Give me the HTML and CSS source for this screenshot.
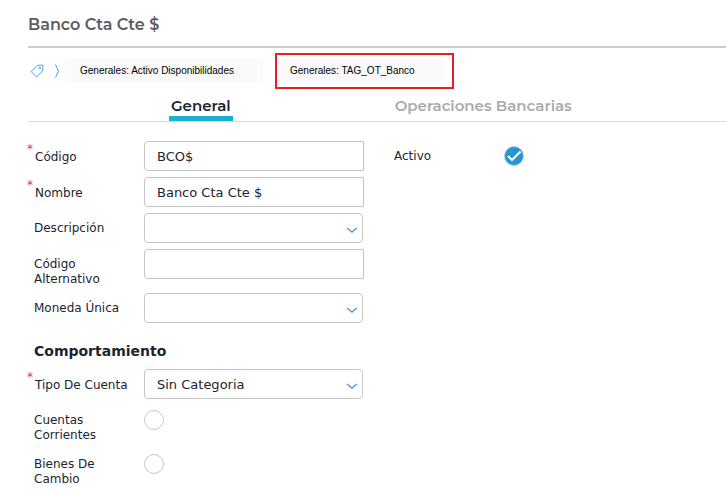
FILE: index.html
```html
<!DOCTYPE html>
<html lang="es">
<head>
    <meta charset="UTF-8">
    <meta name="viewport" content="width=device-width, initial-scale=1.0">
    <title>Banco Cta Cte $</title>
    <link rel="stylesheet" href="styles.css">
</head>
<body>
    <header>
        <h1>Banco Cta Cte $</h1>
    </header>

    <div class="tags">
        <svg class="tag-icon" width="14" height="14" viewBox="0 0 14 14" aria-hidden="true">
            <path d="M7.5 1.5 L12.5 1 L13 2 L12.5 7 L6.5 13 L1 7.5 Z"/>
            <circle cx="10" cy="4" r="0.8"/>
        </svg>
        <svg class="arrow-icon" width="6" height="14" viewBox="0 0 6 14" aria-hidden="true">
            <path d="M1.5 0.5 L4.5 7 L1.5 13.5"/>
        </svg>
        <span class="tag">Generales: Activo Disponibilidades</span>
        <span class="tag marked">Generales: TAG_OT_Banco</span>
    </div>

    <nav>
        <a href="#general" class="active">General</a>
        <a href="#operaciones">Operaciones Bancarias</a>
    </nav>

    <form id="general">
        <div class="column">
            <div class="field">
                <label class="required" for="codigo"><span class="star">*</span>Código</label>
                <input type="text" id="codigo" value="BCO$">
            </div>
            <div class="field">
                <label class="required" for="nombre"><span class="star">*</span>Nombre</label>
                <input type="text" id="nombre" value="Banco Cta Cte $">
            </div>
            <div class="field">
                <label for="descripcion">Descripción</label>
                <select id="descripcion">
                    <option></option>
                </select>
            </div>
            <div class="field">
                <label for="alternativo">Código Alternativo</label>
                <input type="text" id="alternativo">
            </div>
            <div class="field">
                <label for="moneda">Moneda Única</label>
                <select id="moneda">
                    <option></option>
                </select>
            </div>

            <h2>Comportamiento</h2>

            <div class="field">
                <label class="required" for="tipo"><span class="star">*</span>Tipo De Cuenta</label>
                <select id="tipo">
                    <option>Sin Categoria</option>
                </select>
            </div>
            <div class="field">
                <label for="corrientes">Cuentas Corrientes</label>
                <input type="checkbox" id="corrientes">
            </div>
            <div class="field">
                <label for="cambio">Bienes De Cambio</label>
                <input type="checkbox" id="cambio">
            </div>
        </div>
        <div class="column">
            <div class="field">
                <label for="activo">Activo</label>
                <input type="checkbox" id="activo" checked>
            </div>
        </div>
    </form>
</body>
</html>
```

FILE: styles.css
```css
* {
    box-sizing: border-box;
}
body {
    font-family: Verdana, "DejaVu Sans", sans-serif;
    font-size: 12px;
    line-height: 15px;
    margin: 0;
    padding-left: 28px;
    background-color: #fff;
    color: #1c2430;
}
header {
    padding: 15px 0 11px;
    border-bottom: 2px solid #cbcbd1;
}
h1 {
    font-family: Montserrat, Inter, sans-serif;
    font-size: 16px;
    font-weight: 600;
    line-height: 20px;
    margin: 0;
    color: #5a5d60;
}
.tags {
    display: flex;
    align-items: center;
    gap: 12px;
    padding: 11px 0 12px 2px;
}
.tag-icon, .arrow-icon {
    fill: none;
    stroke: #48a3ec;
    flex: none;
}
.arrow-icon {
    margin: 0 -7px 0 -2px;
}
.tag {
    position: relative;
    padding: 0 29px 0 15px;
    border-radius: 4px;
    background: #fafafa;
    color: #000;
    font-family: "Liberation Sans", Arial, sans-serif;
    font-size: 10px;
    line-height: 24px;
}
.marked::after {
    content: "";
    position: absolute;
    top: -6px;
    right: -10px;
    bottom: -6px;
    left: 0;
    border: 2px solid #e81e20;
}
nav {
    display: flex;
    gap: 160px;
    padding-left: 141px;
    border-bottom: 1px solid #d9d9d9;
}
nav a {
    padding: 0 2px;
    border-bottom: 5px solid transparent;
    font-family: Montserrat, Inter, sans-serif;
    font-size: 15px;
    font-weight: 600;
    line-height: 21px;
    text-decoration: none;
    color: #aaa;
}
nav a.active {
    border-bottom-color: #1bb0d0;
    color: #1c2430;
}
form {
    display: grid;
    grid-template-columns: 330px 1fr;
    gap: 30px;
    padding: 19px 0 0 6px;
}
.field {
    display: flex;
    align-items: flex-start;
    margin-bottom: 6px;
}
label {
    flex: none;
    width: 110px;
    padding: 8px 12px 0 0;
}
label.required {
    width: 117px;
    margin-left: -7px;
    padding-right: 0;
}
.star {
    display: inline-block;
    width: 8px;
    color: #e8334a;
    vertical-align: 8px;
    line-height: 1px;
}
input[type="text"], select {
    width: 100%;
    min-width: 0;
    height: 30px;
    padding: 0 12px;
    border: 1px solid #c4c4c4;
    border-radius: 4px 1px 1px 4px;
    background: #fff;
    color: #1c2430;
    font-family: Verdana, "DejaVu Sans", sans-serif;
    font-size: 13px;
}
select {
    margin-right: 1px;
    border-radius: 4px;
    appearance: none;
    background: #fff url("data:image/svg+xml,%3Csvg xmlns='http://www.w3.org/2000/svg' width='12' height='7' fill='none' stroke='%235b9bd5' stroke-width='1.5'%3E%3Cpath d='M1 1l5 4 5-4'/%3E%3C/svg%3E") no-repeat right 4px top 13px;
}
input[type="checkbox"] {
    width: 20px;
    height: 20px;
    margin: 5px 0 0;
    border: 1px solid #c8c8c8;
    border-radius: 50%;
    appearance: none;
    background: #fff;
}
input[type="checkbox"]:checked {
    background: #2196d8 url("data:image/svg+xml,%3Csvg xmlns='http://www.w3.org/2000/svg' width='18' height='18' fill='none' stroke='white' stroke-width='2.2'%3E%3Cpath d='M3 9l4 4L15.5 4.5'/%3E%3C/svg%3E") no-repeat center;
}
h2 {
    font-size: 14px;
    line-height: 18px;
    margin: 19px 0 9px;
}
```
